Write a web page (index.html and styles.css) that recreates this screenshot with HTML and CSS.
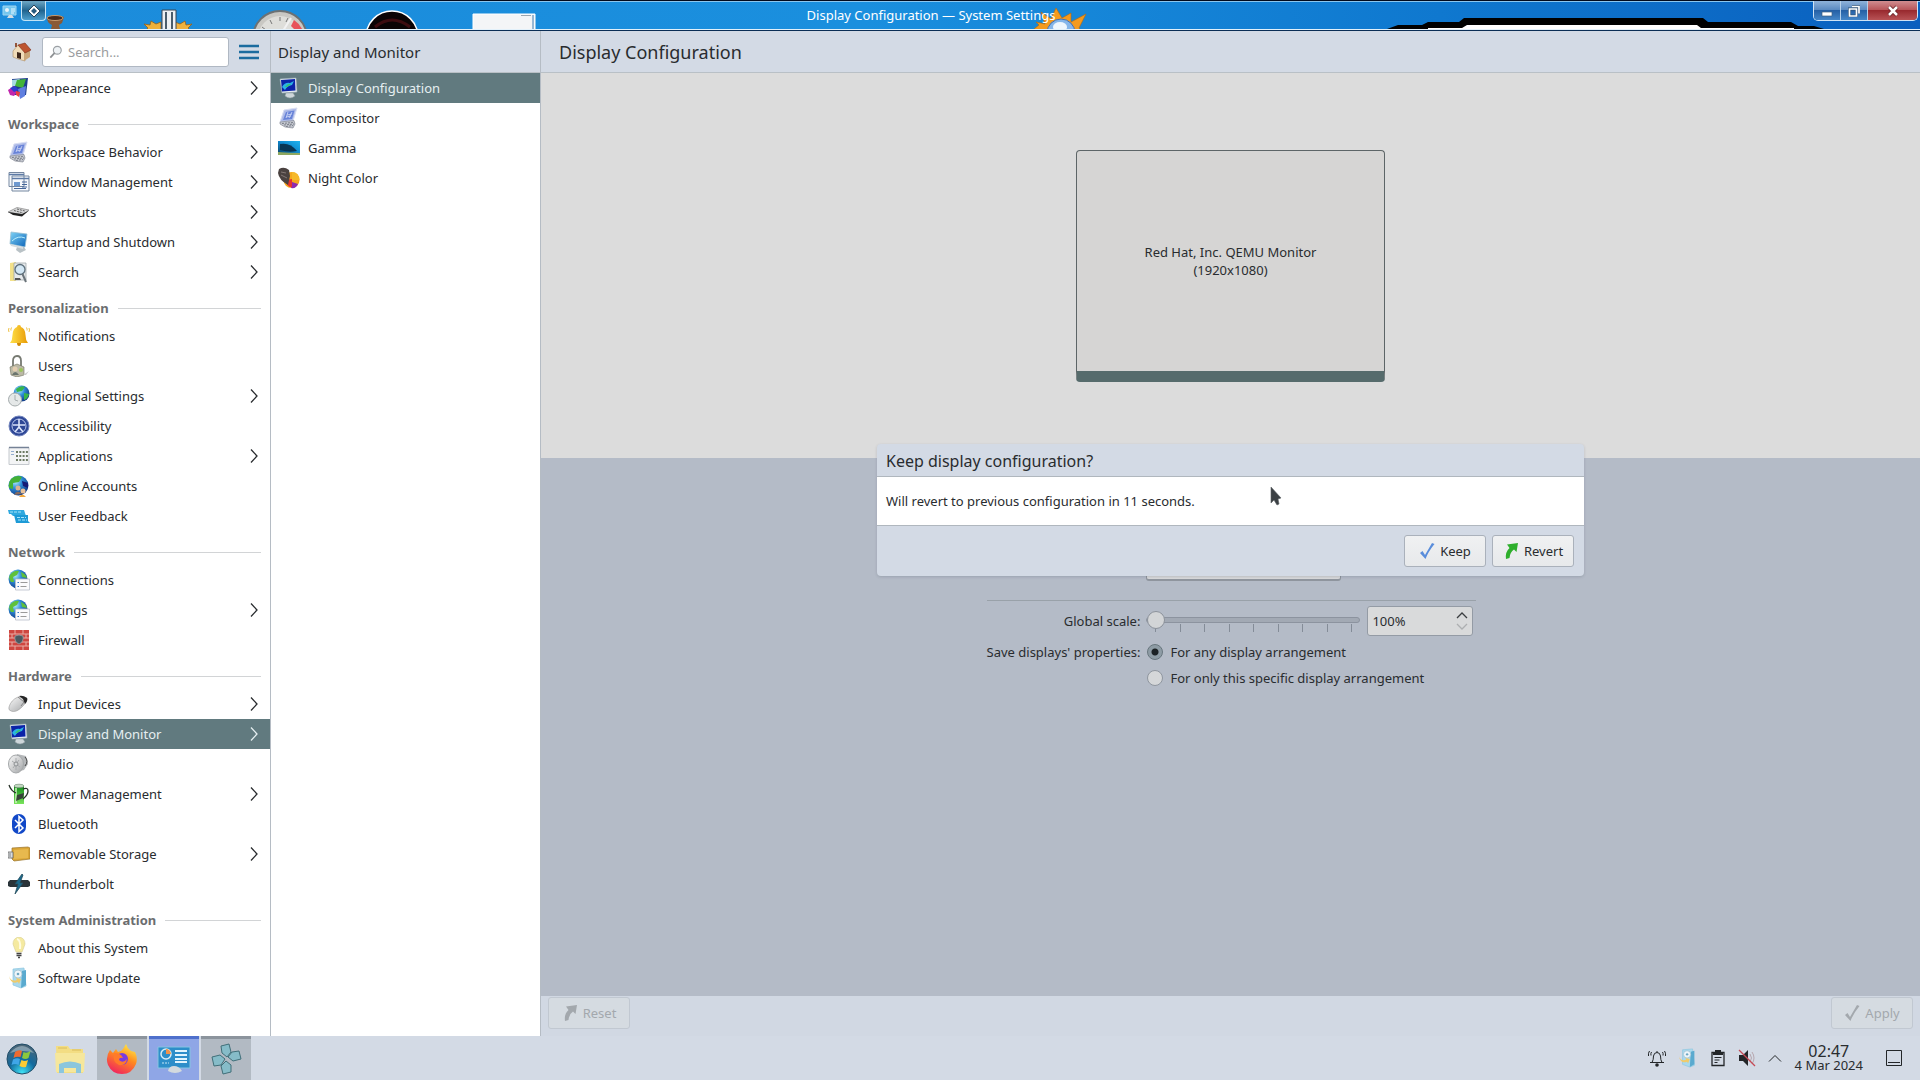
FILE: index.html
```html
<!DOCTYPE html>
<html lang="en">
<head>
  <meta charset="UTF-8">
  <meta name="viewport" content="width=device-width, initial-scale=1.0">
  <title>Display Configuration — System Settings</title>
  <link rel="stylesheet" href="styles.css">
</head>
<body>
  <!-- shared icons -->
  <svg class="sprite" aria-hidden="true">
    <defs>
      <linearGradient id="g-blue" x1="0" y1="0" x2="1" y2="1"><stop offset="0" stop-color="#7fd4f7"/><stop offset="1" stop-color="#0b62b8"/></linearGradient>
      <linearGradient id="g-gamma" x1="0" y1="1" x2="1" y2="0"><stop offset="0" stop-color="#0a3a5c"/><stop offset=".5" stop-color="#0e86cc"/><stop offset="1" stop-color="#1fb4ee"/></linearGradient>
      <linearGradient id="g-gold" x1="0" y1="0" x2="1" y2="0"><stop offset="0" stop-color="#ffe14a"/><stop offset="1" stop-color="#e89a05"/></linearGradient>
      <linearGradient id="g-grey" x1="0" y1="0" x2="1" y2="1"><stop offset="0" stop-color="#fafafa"/><stop offset="1" stop-color="#a2a4a6"/></linearGradient>
      <radialGradient id="g-globe" cx=".35" cy=".3" r=".8"><stop offset="0" stop-color="#bdf0ff"/><stop offset=".4" stop-color="#2f8fd8"/><stop offset="1" stop-color="#0a2a78"/></radialGradient>
      <linearGradient id="g-green" x1="0" y1="0" x2="0" y2="1"><stop offset="0" stop-color="#128c1a"/><stop offset="1" stop-color="#7ae45c"/></linearGradient>
    </defs>
    <symbol id="i-chevron" viewBox="0 0 8 14"><path d="M1 .5 7 7 1 13.5" fill="none" stroke="currentColor" stroke-width="1.3"/></symbol>
    <symbol id="i-monitor" viewBox="0 0 22 22">
      <path d="M2 2 18 1 19 15 4 16Z" fill="#e8eef2" stroke="#9fb0ba" stroke-width=".6"/>
      <path d="M3 3 17 2 17.5 13.5 4 14.5Z" fill="#0b23a8"/>
      <path d="M4 10Q7 5 12 6L16 4 14 8Q9 9 7 13Z" fill="#2bb2e6"/><path d="M7 10Q10 6 13 7L9 10Z" fill="#39c46c"/>
      <path d="M8 16h7l2 3q-5 4-10 0Z" fill="#cdd6da" stroke="#8d9aa0" stroke-width=".5"/>
    </symbol>
    <symbol id="i-desk" viewBox="0 0 22 22">
      <path d="M6 3 19 1 15 14 2 15Z" fill="#aebbe8" stroke="#d9def2" stroke-width="1"/>
      <path d="M8 5 16.5 3.500 14 12 5 13Z" fill="#6883d8"/><path d="M9 8l5-1M8 10l5-1M10 5l-2 6M14 5l-3 6" stroke="#cfd8f6" stroke-width=".8"/>
      <path d="M2 15 16 13.5 17 17 15 21 7 20 2 17Z" fill="#c4c7cf" stroke="#767b86" stroke-width=".6"/>
      <path d="M4 16.5l11-1M6 18l10-1M8 19.5l7-1" stroke="#686d78" stroke-width=".8" stroke-dasharray="2 1"/>
    </symbol>
    <symbol id="i-netglobe" viewBox="0 0 22 22">
      <circle cx="10" cy="10" r="9.5" fill="url(#g-globe)"/>
      <path d="M2 6Q6 1 11 2L9 6 5 8 6 13 3 13Q0 9 2 6ZM13 3q5 2 6 6l-5-1Z" fill="#5fc13b"/>
      <path d="M7.500 10h14v11h-14Z" fill="#fbfbfd" stroke="#b9bfca" stroke-width=".8"/>
      <path d="M9.500 13.500h1.500M9.500 17.500h1.500" stroke="#3a76c2" stroke-width="1.200"/><path d="M12.500 13.500h7M12.500 17.500h6" stroke="#9a9a9a" stroke-width="1"/>
    </symbol>
    <symbol id="i-package" viewBox="0 0 22 22">
      <path d="M5 2 16 1 18 19 13 21 5 18Z" fill="#a9d9ee" stroke="#8cc6e0" stroke-width=".7"/>
      <path d="M14 4 18 3 18 18 13 21Z" fill="#5aaacf"/><circle cx="10" cy="7" r="4" fill="#eef6fa" stroke="#9fc0d0" stroke-width=".8"/><circle cx="10" cy="7" r="1.300" fill="#6ea6c2"/>
      <path d="M1 9q2 6 8 4l-1-2 5 1-2 5-1-2q-7 3-9-6Z" fill="#f0cb6a"/>
    </symbol>
    <symbol id="i-revert" viewBox="0 0 16 18"><path d="M3 17Q2 10 6.500 6L4 2.500 15 1 13.500 10 11 7.500Q7 10 6.500 16Z" fill="currentColor"/></symbol>
    <symbol id="i-check" viewBox="0 0 16 18"><path d="M1 11 3.500 9 6 13 13 1 15.500 2Q9 10 6.500 17Z" fill="currentColor"/></symbol>
  </svg>

  <header class="titlebar">
    <!-- desktop showing through the glass frame -->
    <svg class="desktop" viewBox="0 0 1920 29" width="1920" height="29" aria-hidden="true">
      <path d="M47 18Q55 13 64 17L62 23 59 25 60 29H51L52 25Q47 23 47 18Z" fill="#8a5a36"/><ellipse cx="55" cy="18" rx="8" ry="2.500" fill="#4a2c1b" stroke="#c79a6d"/>
      <path d="M144 24l6 1 1-4 5 3 5-2v9h-16l3-3ZM192 24l-6 1-1-4-5 3-5-2v9h16l-3-3Z" fill="#f0b13c" stroke="#94611a" stroke-width=".8"/>
      <path d="M162 10h14v20h-14Z" fill="#eef1f3" stroke="#394754"/><path d="M166 12v18M172 12v18" stroke="#4b5d6b" stroke-width="2"/>
      <circle cx="280" cy="38" r="27" fill="#c9c8c3" stroke="#6c7173" stroke-width="2"/><circle cx="280" cy="38" r="22" fill="#dededa"/>
      <path d="M294 20A24 24 0 0 1 303 31L297 32 291 26Z" fill="#e8525a"/><path d="M281 34 291 18" stroke="#f2f2f2" stroke-width="2"/><path d="M262 27l4 3M270 20l2 4M280 17v4M288 18l-2 4" stroke="#777"/>
      <circle cx="392" cy="37" r="26" fill="#0b0405" stroke="#fff" stroke-width="1.500"/><path d="M375 27Q392 13 410 27" stroke="#3d0c10" stroke-width="3" fill="none"/>
      <path d="M473 14h62v16h-62Z" fill="#f4f5f7" stroke="#fff"/><path d="M533 15v14" stroke="#3c7bb0"/><path d="M521 15.500h10" stroke="#9ba6b0"/>
      <path d="M1036 22l9 2-4-12 10 7 5-11 6 10 9-5v9l15-8-7 14 4 4h-46l-3-3 5-4Z" fill="#f49a1d" stroke="#b5670b" stroke-width=".6"/>
      <circle cx="1061" cy="33" r="14" fill="#85b6ea" stroke="#446fae"/><ellipse cx="1060" cy="27" rx="7" ry="5" fill="#eef6fd"/>
      <path d="M1387 29 1398 25H1422L1428 22H1459L1464 18H1703L1708 22H1791L1798 26H1814L1824 29Z" fill="#000"/>
      <path d="M1428 29V28H1462L1467 25H1697L1701 28H1794V29Z" fill="#fff"/>
    </svg>
    <svg class="app-icon" viewBox="0 0 16 16" aria-hidden="true"><path d="M1 2h13v9H1Z" fill="#75c6ee" stroke="#9ed5f1"/><circle cx="5" cy="6" r="2" fill="#e7f4fa"/><path d="M9 5h4M9 7h4M9 9h3" stroke="#e9f8ff"/><path d="M5 14l2-3h3l2 3Z" fill="#d4dde3"/></svg>
    <button class="keep-above" aria-label="Keep above"><svg viewBox="0 0 14 14" width="14" height="14"><path d="M7 1 13 7 7 13 1 7Z" fill="#fff" stroke="#2c4558"/><path d="M7 4 10 7 7 10 4 7Z" fill="#275a7e"/></svg></button>
    <div class="window-title">Display Configuration — System Settings</div>
    <div class="window-buttons">
      <button aria-label="Minimize"><svg viewBox="0 0 12 12" width="12" height="12"><path d="M1 7h10v4H1Z" fill="#fff" stroke="#3c5e82" stroke-width=".7"/></svg></button>
      <button aria-label="Restore"><svg viewBox="0 0 12 12" width="12" height="12"><path d="M4 1.500h7v7M1.500 4h7v7h-7Z" fill="none" stroke="#2f5277" stroke-width="3"/><path d="M4 1.500h7v7M1.500 4h7v7h-7Z" fill="none" stroke="#fff" stroke-width="1.700"/></svg></button>
      <button class="close" aria-label="Close"><svg viewBox="0 0 12 12" width="12" height="12"><path d="M2 2l8 8M10 2l-8 8" stroke="#612025" stroke-width="4"/><path d="M2 2l8 8M10 2l-8 8" stroke="#fff" stroke-width="2.500"/></svg></button>
    </div>
  </header>

  <div class="window">
    <nav class="sidebar">
      <div class="toolbar">
        <button class="plain" aria-label="Home"><svg viewBox="0 0 22 22" width="22" height="22"><path d="M3 10 8 4 15 9V20L8 18 3 16Z" fill="#f0dcb9" stroke="#aa8b63" stroke-width=".6"/><path d="M14 10 20 9V16L14 20Z" fill="#c9a679"/><path d="M8 4 15 2 21 9 15 12Z" fill="#bd5531" stroke="#7c2e18" stroke-width=".6"/><path d="M7 11l4 1v6l-4-1Z" fill="#3f281b"/><path d="M5 2h2v4H5Z" fill="#93543a"/></svg></button>
        <div class="search">
          <svg viewBox="0 0 16 16" width="14" height="14" aria-hidden="true"><circle cx="9.500" cy="6" r="4.500" fill="#eef2f5" stroke="#9ba0a4" stroke-width="1.300"/><path d="M6.500 9 1.500 14.500" stroke="#8d9093" stroke-width="2"/></svg>
          <input type="text" placeholder="Search..." aria-label="Search">
        </div>
        <button class="plain menu" aria-label="Menu"><svg viewBox="0 0 20 16" width="20" height="16"><path d="M0 2h20M0 8h20M0 14h20" stroke="#1b6c9f" stroke-width="2.500"/></svg></button>
      </div>

      <a class="item" href="#"><svg class="icon" viewBox="0 0 22 22"><path d="M4 2 20 1 18 18 5 18Z" fill="#1d3c8c"/><path d="M4 3 12 2 8 9 4 9Z" fill="#a7dbe4"/><path d="M9 3l9-1-3 9-8-2Z" fill="#42b339"/><path d="M0 13l6-4 3 6-3 4-4-1Z" fill="#c026ad"/><path d="M2 11l5-2 4 4-5 2Z" fill="#2b3fd0"/><path d="M10 12l8-3-1 10-5 3Z" fill="#5f7fe0"/><path d="M8 14l4 1-1 5-3-2Z" fill="#ea3e3e"/></svg><span>Appearance</span><svg class="chevron"><use href="#i-chevron"/></svg></a>

      <h2 class="section">Workspace</h2>
      <a class="item" href="#"><svg class="icon"><use href="#i-desk"/></svg><span>Workspace Behavior</span><svg class="chevron"><use href="#i-chevron"/></svg></a>
      <a class="item" href="#"><svg class="icon" viewBox="0 0 22 22"><path d="M1 1.500h15v14H1ZM4 5h17v15H4Z" fill="#f7f9fc" stroke="#7587a0"/><path d="M1 3.500h15M4 7.500h17" stroke="#5e7ba6" stroke-width="1.500"/><path d="M6 11h6v4H6Z" fill="#6f99cf"/><path d="M14 11h5M14 13.500h5M14 16h5M6 17.500h12" stroke="#46679a"/></svg><span>Window Management</span><svg class="chevron"><use href="#i-chevron"/></svg></a>
      <a class="item" href="#"><svg class="icon" viewBox="0 0 22 22"><path d="M0 11 9 6.500 21 9 14 14Z" fill="#d4d5d6" stroke="#777" stroke-width=".6"/><path d="M0 11 14 13 21 9.500 14 15.500 5 14Z" fill="#222"/><path d="M6 9.500l9 2.500M9 8l8 2" stroke="#666" stroke-dasharray="2 1"/></svg><span>Shortcuts</span><svg class="chevron"><use href="#i-chevron"/></svg></a>
      <a class="item" href="#"><svg class="icon" viewBox="0 0 22 22"><path d="M3 1 19 3 17 16 2 13Z" fill="url(#g-blue)" stroke="#98bfd2" stroke-width=".8"/><path d="M4 10Q10 4 17 7" stroke="#baf0ff" fill="none"/><path d="M9 16h7l2 3-6 3-4-3Z" fill="#b9c2c6"/><path d="M2 13l13 3v2L3 15Z" fill="#d7dde0"/></svg><span>Startup and Shutdown</span><svg class="chevron"><use href="#i-chevron"/></svg></a>
      <a class="item" href="#"><svg class="icon" viewBox="0 0 22 22"><path d="M2 2 8 1V20H2Z" fill="#f3e189"/><path d="M6 2h12v17H6Z" fill="#e7eaec" stroke="#969da2" stroke-width=".7"/><circle cx="12" cy="8.500" r="5" fill="#d3e7f4" stroke="#5e707c" stroke-width="1.300"/><path d="M14.500 13 18 21" stroke="#6a7379" stroke-width="2"/><path d="M7 17h5l1 2H7Z" fill="#555"/></svg><span>Search</span><svg class="chevron"><use href="#i-chevron"/></svg></a>

      <h2 class="section">Personalization</h2>
      <a class="item" href="#"><svg class="icon" viewBox="0 0 22 22"><path d="M11 0q2 0 2 2 4 1 4.500 8 0 5 2.500 8H2Q4.500 15 4.500 10 5 3 9 2q0-2 2-2Z" fill="url(#g-gold)"/><path d="M9 18h4q0 3-2 3t-2-3Z" fill="#cf8908"/><path d="M1 3q-1 2 0 4M3.500 2.500q-1 2-.5 3M21 3q1 2 0 4M18.500 2.500q1 2 .5 3" stroke="#edc145" fill="none"/></svg><span>Notifications</span></a>
      <a class="item" href="#"><svg class="icon" viewBox="0 0 22 22"><path d="M5 11V6Q5 1 9 1t4 5v5" fill="none" stroke="#777a72" stroke-width="1.800"/><path d="M2 12 9 9l7 3v8l-7 2-6-2Z" fill="#bbb9a5" stroke="#70705e" stroke-width=".6"/><circle cx="7" cy="14" r="2.500" fill="#e3cdb0"/><path d="M4 20q3-6 7 0Z" fill="#6a746d"/><circle cx="13" cy="15" r="2" fill="#9bc45c"/><path d="M15 20l6-4-3 4Z" fill="#ccc"/></svg><span>Users</span></a>
      <a class="item" href="#"><svg class="icon" viewBox="0 0 22 22"><circle cx="13.500" cy="8.500" r="8" fill="url(#g-globe)"/><path d="M8 4q5-4 9-2l-3 4-5 1ZM16 8l5 1q-1 5-5 6Z" fill="#39b54a"/><circle cx="7" cy="14.500" r="6.500" fill="#e5e8e8" stroke="#a4abac"/><path d="M7 10v5l3 1" stroke="#a5adae" fill="none"/></svg><span>Regional Settings</span><svg class="chevron"><use href="#i-chevron"/></svg></a>
      <a class="item" href="#"><svg class="icon" viewBox="0 0 22 22"><circle cx="11" cy="11" r="10" fill="#2e4796" stroke="#7284bd"/><circle cx="11" cy="11" r="7" fill="none" stroke="#b9c7ee"/><path d="M11 4v8M5 10h12M11 12l-4 5M11 12l4 5" stroke="#dbe4fa" stroke-width="1.600"/></svg><span>Accessibility</span></a>
      <a class="item" href="#"><svg class="icon" viewBox="0 0 22 22"><path d="M1 2.500h20v17H1Z" fill="#f3f4f5" stroke="#c5c9ce"/><path d="M1 2.500h20" stroke="#758296" stroke-width="1.500"/><path d="M3 6.500h3M3 9.500h3" stroke="#92acd0"/><path d="M8 7h12M8 11h12M8 15h12" stroke="#6d7a64" stroke-width="2" stroke-dasharray="2 1.300"/></svg><span>Applications</span><svg class="chevron"><use href="#i-chevron"/></svg></a>
      <a class="item" href="#"><svg class="icon" viewBox="0 0 22 22"><circle cx="10.500" cy="10.500" r="10" fill="url(#g-globe)"/><path d="M3 4q5-5 11-2l-3 5-6 1v6l-4-1Q0 8 3 4Z" fill="#43b035"/><path d="M14 6l6 2v5l-5-2Z" fill="#161b75"/><circle cx="10" cy="13" r="2.500" fill="#d9b193"/><path d="M6 20q3-6 8-1Z" fill="#896a5c"/><circle cx="15" cy="16" r="2.500" fill="#e8c19a"/><path d="M11 22q3-5 7 0Z" fill="#f1a63c"/></svg><span>Online Accounts</span></a>
      <a class="item" href="#"><svg class="icon" viewBox="0 0 22 22"><path d="M0 5h16l2 6H5L3 9H1Z" fill="#2fa9df"/><path d="M6 10h14v6l2 2H8Z" fill="#1d9ad6"/><path d="M2 7h12M9 12.500h9M10 15h9" stroke="#a7e5fb" stroke-dasharray="3 1"/></svg><span>User Feedback</span></a>

      <h2 class="section">Network</h2>
      <a class="item" href="#"><svg class="icon"><use href="#i-netglobe"/></svg><span>Connections</span></a>
      <a class="item" href="#"><svg class="icon"><use href="#i-netglobe"/></svg><span>Settings</span><svg class="chevron"><use href="#i-chevron"/></svg></a>
      <a class="item" href="#"><svg class="icon" viewBox="0 0 22 22"><path d="M1 1h20v20H1Z" fill="#cf4640"/><path d="M1 5h20M1 9h20M1 13h20M1 17h20M7 1v4M15 1v4M4 5v4M18 5v4M4 13v4M18 13v4M7 17v4M15 17v4" stroke="#e9aca5"/><path d="M11 6l4 1q1 6-4 8-5-2-4-8Z" fill="#4b5960" stroke="#939fa5" stroke-width=".8"/></svg><span>Firewall</span></a>

      <h2 class="section">Hardware</h2>
      <a class="item" href="#"><svg class="icon" viewBox="0 0 22 22"><path d="M1 14Q3 7 10 4L19 5Q20 8 14 14 8 20 3 18 0 17 1 14Z" fill="url(#g-grey)" stroke="#999" stroke-width=".6"/><path d="M11 3Q15 2 19 5 20 8 17 11L15 6Z" fill="#252525"/><path d="M10 4 16 9M16 9l-3 4" stroke="#777" stroke-width=".8"/></svg><span>Input Devices</span><svg class="chevron"><use href="#i-chevron"/></svg></a>
      <a class="item selected" href="#"><svg class="icon"><use href="#i-monitor"/></svg><span>Display and Monitor</span><svg class="chevron"><use href="#i-chevron"/></svg></a>
      <a class="item" href="#"><svg class="icon" viewBox="0 0 22 22"><path d="M9 1l9 2 2 8-4 6-8 2Z" fill="#b4b7b9"/><ellipse cx="8" cy="11" rx="7.500" ry="9" fill="url(#g-grey)" stroke="#a3a6a8"/><path d="M4 8l8 6M11 7l-6 8M8 5v12" stroke="#a8abad"/><circle cx="8" cy="11" r="2" fill="#d5d7d8" stroke="#8c8f91"/><path d="M17 4q4 4 0 9" stroke="#444" fill="none"/></svg><span>Audio</span></a>
      <a class="item" href="#"><svg class="icon" viewBox="0 0 22 22"><path d="M6 3h10v18H6Z" fill="url(#g-green)"/><ellipse cx="11" cy="3" rx="5" ry="1.800" fill="#c2d9c0" stroke="#66806a" stroke-width=".6"/><path d="M8 5v15" stroke="#cff3bf" stroke-width="1.500"/><path d="M1 2q2 6 7 8M15 6q5-2 5 2t-5 8" stroke="#263128" fill="none" stroke-width="1.300"/><path d="M9 12l7-2-1 5-7 3Z" fill="#374239"/></svg><span>Power Management</span><svg class="chevron"><use href="#i-chevron"/></svg></a>
      <a class="item" href="#"><svg class="icon" viewBox="0 0 22 22"><rect x="4" y="1" width="14" height="20" rx="7" fill="#1148c8"/><path d="M7 7l8 8-4 3.500v-15L15 7l-8 8" fill="none" stroke="#fff" stroke-width="1.500"/></svg><span>Bluetooth</span></a>
      <a class="item" href="#"><svg class="icon" viewBox="0 0 22 22"><path d="M4 5 20 4 22 5V16L6 18 4 16Z" fill="#dba636" stroke="#98732b" stroke-width=".7"/><path d="M6 7 20 6V15L6 16Z" fill="#e8b94e"/><path d="M0 9h5v6H0Z" fill="#d9dcde" stroke="#666" stroke-width=".8"/><path d="M1.500 11h1M1.500 13h1" stroke="#333"/></svg><span>Removable Storage</span><svg class="chevron"><use href="#i-chevron"/></svg></a>
      <a class="item" href="#"><svg class="icon" viewBox="0 0 22 22"><path d="M0 9 2 7H20L22 9V13L20 14H2L0 13Z" fill="#2a3439"/><path d="M14 1 7 11h3L7 21 15 10h-3l3-8Z" fill="#1b6a8c" stroke="#234b5c" stroke-width=".8"/></svg><span>Thunderbolt</span></a>

      <h2 class="section">System Administration</h2>
      <a class="item" href="#"><svg class="icon" viewBox="0 0 22 22"><path d="M11 0Q17 1 17 7 16 10 14 15H8Q6 10 5 7 5 1 11 0Z" fill="#f5eaa0" stroke="#d8cf92" stroke-width=".6"/><path d="M9 2q4 1 3 10" stroke="#fffbe1" stroke-width="2" fill="none"/><path d="M8.500 16.500h5M8.500 18.500h5M10 20.500h2" stroke="#444" stroke-width="1.300"/></svg><span>About this System</span></a>
      <a class="item" href="#"><svg class="icon"><use href="#i-package"/></svg><span>Software Update</span></a>
    </nav>

    <nav class="subpages">
      <h2 class="toolbar">Display and Monitor</h2>
      <a class="item selected" href="#"><svg class="icon"><use href="#i-monitor"/></svg><span>Display Configuration</span></a>
      <a class="item" href="#"><svg class="icon"><use href="#i-desk"/></svg><span>Compositor</span></a>
      <a class="item" href="#"><svg class="icon" viewBox="0 0 22 22"><path d="M0 4h22v14H0Z" fill="url(#g-gamma)"/><path d="M2 7q10-2 17 7-8 2-17-1Z" fill="#083553"/><path d="M0 15q11 1 22 1v2H0Z" fill="#8fa860"/></svg><span>Gamma</span></a>
      <a class="item" href="#"><svg class="icon" viewBox="0 0 22 22"><circle cx="13.500" cy="13" r="8" fill="#f4a81d"/><path d="M14 5q7 0 7.500 8L14 13Z" fill="#f6b92a"/><path d="M14 15l6 2q-2 5-7 4Z" fill="#8d2ab0"/><path d="M8 13l6-1v8q-5 1-6-7Z" fill="#e5342d"/><path d="M1 2Q6-1 11 3L12 9 10 18Q1 13 0 6Z" fill="#4a4240"/><path d="M3 5l5 1M3 8l6 3" stroke="#837875"/></svg><span>Night Color</span></a>
    </nav>

    <main class="page">
      <h1 class="toolbar">Display Configuration</h1>

      <section class="preview">
        <div class="screen">
          <p>Red Hat, Inc. QEMU Monitor<br>(1920x1080)</p>
        </div>
      </section>

      <form class="settings">
        <select class="refresh" aria-label="Refresh rate"><option>60 Hz</option></select>
        <hr>
        <label class="name" for="scale">Global scale:</label>
        <div class="scale">
          <div class="slider">
            <input type="range" id="scale" min="100" max="300" value="100">
            <svg viewBox="0 0 214 8" width="214" height="8" aria-hidden="true"><path d="M9.500 0v8M34.500 0v8M58.500 0v8M83.500 0v8M107.500 0v8M132.500 0v8M156.500 0v8M181.500 0v8M205.500 0v8" stroke="#848c98"/></svg>
          </div>
          <div class="spinbox">
            <input type="text" value="100%" aria-label="Scale percentage">
            <span class="steps">
              <button type="button" aria-label="Increase"><svg viewBox="0 0 12 8" width="12" height="8"><path d="M1 7l5-5 5 5" fill="none" stroke="#3b3e41" stroke-width="1.300"/></svg></button>
              <button type="button" aria-label="Decrease" disabled><svg viewBox="0 0 12 8" width="12" height="8"><path d="M1 1l5 5 5-5" fill="none" stroke="#adafb1" stroke-width="1.300"/></svg></button>
            </span>
          </div>
        </div>
        <span class="name">Save displays' properties:</span>
        <label class="choice"><input type="radio" name="arrangement" checked>For any display arrangement</label>
        <label class="choice second"><input type="radio" name="arrangement">For only this specific display arrangement</label>
      </form>

      <footer class="actions">
        <button class="button" disabled><svg width="16" height="18"><use href="#i-revert"/></svg>Reset</button>
        <button class="button" disabled><svg width="16" height="18"><use href="#i-check"/></svg>Apply</button>
      </footer>

      <div class="dialog" role="dialog" aria-labelledby="dialog-title">
        <h2 id="dialog-title">Keep display configuration?</h2>
        <p>Will revert to previous configuration in 11 seconds.</p>
        <div class="dialog-buttons">
          <button class="button keep"><svg width="16" height="18"><use href="#i-check"/></svg>Keep</button>
          <button class="button revert"><svg width="16" height="18"><use href="#i-revert"/></svg>Revert</button>
        </div>
        <svg class="pointer" viewBox="0 0 12 20" width="12" height="20" aria-hidden="true"><path d="M1 1V17L4 14 7 19 9 18 8 13 11 12Z" fill="#3b4044" stroke="#5a5f63" stroke-width=".6"/></svg>
      </div>
    </main>
  </div>

  <footer class="taskbar">
    <button class="task start" aria-label="Start"><svg viewBox="0 0 32 32" width="32" height="32">
      <defs><radialGradient id="g-orb" cx=".5" cy=".95" r=".9"><stop offset="0" stop-color="#3fe2f5"/><stop offset=".5" stop-color="#126a9e"/><stop offset="1" stop-color="#4a6678"/></radialGradient></defs>
      <circle cx="16" cy="16" r="15" fill="url(#g-orb)" stroke="#1f4c68"/>
      <path d="M4 10Q16-4 28 10 16 6 4 10Z" fill="#fff" opacity=".35"/>
      <path d="M9 9q4-3 7-1l-1.500 6q-4-1-7 1Z" fill="#ee6a30"/><path d="M17.500 9q3 2 7-1l-2 7q-3 2-6.500 0Z" fill="#8cc83c"/><path d="M7 16.500q4-2 7-.5l-1.500 6q-3-2-7 0Z" fill="#40a6e8"/><path d="M15.500 17q3 2 6.500 0l-2 7q-3 1-6.500-1Z" fill="#fccb34"/></svg></button>
    <button class="task" aria-label="File manager"><svg viewBox="0 0 32 32" width="32" height="32"><path d="M2 3h12l2 3h13v24H3Z" fill="#f3dd83"/><path d="M4 5h9M18 7h9" stroke="#d9bc5c"/><path d="M1 10h30l-1 19H2Z" fill="#f6e79c"/><path d="M5 30v-9q11-5 22 0v9h-5v-5H10v5Z" fill="#8bc6dd"/></svg></button>
    <button class="task running" aria-label="Firefox"><svg viewBox="0 0 32 32" width="32" height="32">
      <defs><linearGradient id="g-fox" x1=".8" y1="0" x2=".3" y2="1"><stop offset="0" stop-color="#fff04a"/><stop offset=".45" stop-color="#ff8a1f"/><stop offset="1" stop-color="#f0235f"/></linearGradient></defs>
      <path d="M20 1q1 4 5 7l4 1q3 6 1 12-4 10-14 10T2 22Q-1 14 4 7l3 3 3-4 2 3q4-1 5-3Z" fill="url(#g-fox)"/>
      <circle cx="16" cy="16" r="6" fill="#7a3be0"/><path d="M8 10q7 0 9 5-4-1-4 2 4 4 8-1-1 7-8 6-7-3-5-12Z" fill="#ff7a2a"/></svg></button>
    <button class="task running active" aria-label="System Settings"><svg viewBox="0 0 34 30" width="34" height="30"><path d="M1 3h32v21H1Z" fill="#2d8ec9" stroke="#86c3e2"/><path d="M18 7h12M18 11h12M18 15h12M18 18h12" stroke="#dff4fd" stroke-width="2"/><circle cx="9" cy="10" r="5" fill="none" stroke="#d6edf7" stroke-width="1.500"/><path d="M9 5a5 5 0 0 1 5 5H9Z" fill="#f0934a"/><path d="M5 19h7" stroke="#c5e7f6" stroke-dasharray="2 1"/><path d="M11 27q1-5 6-5t8 5q-7 4-14 0Z" fill="#d3dade"/></svg></button>
    <button class="task running" aria-label="Game controller"><svg viewBox="0 0 32 32" width="32" height="32"><g fill="#86bcc8" stroke="#416f79"><path d="M11 3l8-2 2 8-4 5-5-4Z"/><path d="M22 9l7-1 2 8-8 2-5-4Z"/><path d="M16 18l5 4v7l-8 2-2-8Z"/><path d="M2 14l8-2 5 4-4 6-7 1Z"/></g></svg></button>

    <div class="tray">
      <button class="plain" aria-label="Notifications"><svg viewBox="0 0 18 18" width="18" height="18"><path d="M4 13.500Q5.500 11 5.500 7 6 3.500 9 3.500T12.500 7q0 4 1.500 6.500ZM9 3.500V2M1.500 2Q0 4 .5 7M3.500 3Q2.500 4.500 3 6.500M16.500 2Q18 4 17.500 7M14.500 3Q15.500 4.500 15 6.500M2 13.500h14" fill="none" stroke="#232629"/><circle cx="9" cy="16" r="1.800" fill="#232629"/></svg></button>
      <button class="plain" aria-label="Updates"><svg width="20" height="20"><use href="#i-package"/></svg></button>
      <button class="plain" aria-label="Clipboard"><svg viewBox="0 0 16 18" width="16" height="18"><path d="M2 3.500h12v13H2Z" fill="none" stroke="#232629" stroke-width="1.300"/><path d="M5 1h6v2h2v3H3V3h2Z" fill="#232629"/><path d="M4.500 8.500h7M4.500 11h5M4.500 13.500h3" stroke="#232629"/></svg></button>
      <button class="plain" aria-label="Muted"><svg viewBox="0 0 18 18" width="18" height="18"><path d="M1 6h4l5-5v16l-5-5H1Z" fill="#232629"/><path d="M12 5q3 4 0 8M14 3q4 6 0 12" fill="none" stroke="#b7a6ae"/><path d="M1 1l16 16" stroke="#c64a56" stroke-width="1.300"/></svg></button>
      <button class="plain" aria-label="Show hidden icons"><svg viewBox="0 0 14 8" width="14" height="8"><path d="M1 7.500l6-6 6 6" fill="none" stroke="#232629"/></svg></button>
      <div class="clock"><time>02:47</time><span>4 Mar 2024</span></div>
      <button class="plain" aria-label="Show desktop"><svg viewBox="0 0 16 16" width="16" height="16"><path d="M.5.5h15v15H.5ZM2 12.500h12" fill="none" stroke="#232629"/></svg></button>
    </div>
  </footer>
</body>
</html>
```
FILE: styles.css
```css
* { box-sizing: border-box; }
body {
  margin: 0;
  min-height: 100vh;
  display: flex;
  flex-direction: column;
  font-family: "Noto Sans", sans-serif;
  font-size: 13px;
  line-height: 18px;
  color: #292c2f;
  background: #d3dae5;
}
h1, h2, p { margin: 0; font-weight: normal; }
button, input, select { font: inherit; color: inherit; }
svg { display: block; flex: none; }
.sprite { position: absolute; width: 0; height: 0; }
.plain { border: 0; padding: 0; background: none; }

/* title bar */
.titlebar {
  position: relative;
  display: flex;
  align-items: flex-start;
  height: 31px;
  overflow: hidden;
  background: linear-gradient(90deg, #1c8cdb 0%, #1a8fde 45%, #0f78cf 75%, #0a5fbe 100%);
  border-top: 1px solid #020a1c;
  border-bottom: 1px solid #0a2d55;
  box-shadow: inset 0 1px #8ac6ef, inset 0 -1px #e3f1fb;
}
.desktop { position: absolute; left: 0; top: -1px; }
.titlebar > :not(.desktop) { position: relative; }
.app-icon { width: 16px; height: 16px; margin: 3px 3px 0 2px; }
.keep-above {
  width: 25px;
  height: 20px;
  display: grid;
  place-items: center;
  padding: 0;
  border: 1px solid #c5e4f5;
  border-top: 0;
  border-radius: 0 0 4px 4px;
  background: linear-gradient(#6fa8c6, #20648f 50%, #4d9fcd);
}
.window-title { flex: 1; padding: 5px 0 0 3px; text-align: center; color: #fff; }
.window-buttons {
  display: flex;
  height: 20px;
  margin-right: 2px;
  border: 1px solid #cfe3f5;
  border-top: 0;
  border-radius: 0 0 5px 5px;
  overflow: hidden;
}
.window-buttons button {
  width: 27px;
  display: grid;
  place-items: center;
  padding: 0;
  border: 0;
  border-right: 1px solid #b5d0ea;
  background: linear-gradient(#8fb2da, #5c8bc2 45%, #2560a5 50%, #4486c8);
}
.window-buttons .close {
  width: 49px;
  border-right: 0;
  background: linear-gradient(#d08d90, #b9575b 45%, #992a2f 50%, #b85356);
}

/* window columns */
.window { flex: 1; display: flex; }
.sidebar, .subpages {
  flex: none;
  width: 271px;
  background: #fff;
  border-right: 1px solid #b5bcc4;
}
.subpages { width: 270px; }
.toolbar {
  display: flex;
  align-items: center;
  height: 42px;
  background: #d3dae5;
  border-bottom: 1px solid #b9c0c6;
}
.sidebar .toolbar { padding: 0 11px 0 10px; gap: 10px; }
.subpages .toolbar { padding: 0 7px; font-size: 15px; }
.page .toolbar { padding: 0 18px; font-size: 18px; }
.search {
  flex: 1;
  display: flex;
  align-items: center;
  gap: 5px;
  height: 30px;
  min-width: 0;
  padding: 0 6px;
  background: #fff;
  border: 1px solid #b0b8c3;
  border-radius: 3px;
}
.search input { flex: 1; min-width: 0; padding: 0; border: 0; outline: 0; background: none; }
.search input::placeholder { color: #9a9c9e; }

.item {
  display: flex;
  align-items: center;
  gap: 8px;
  height: 30px;
  padding: 0 12px 0 8px;
  color: #292c2f;
  text-decoration: none;
}
.subpages .item { padding-left: 7px; }
.item span { flex: 1; }
.item.selected { background: #617a7f; color: #e6eff1; }
.icon { width: 22px; height: 22px; }
.chevron { width: 8px; height: 14px; }
.section {
  display: flex;
  align-items: center;
  gap: 9px;
  height: 34px;
  padding: 8px 9px 0 8px;
  font-size: 13px;
  font-weight: bold;
  color: #6b6d6f;
}
.section::after { content: ""; flex: 1; height: 1px; background: #d2d4d6; }

/* page */
.page { flex: 1; position: relative; display: flex; flex-direction: column; background: #b4bbc7; }
.preview {
  height: 385px;
  padding-top: 77px;
  background: #dcdcdc;
}
.screen {
  display: grid;
  place-items: center;
  width: 309px;
  height: 232px;
  margin: 0 auto;
  text-align: center;
  background: #d6d5d4;
  border: 1px solid #5d6567;
  border-bottom: 11px solid #566b6c;
  border-radius: 4px;
}
.settings {
  flex: 1;
  display: grid;
  grid-template-columns: auto 330px;
  align-content: start;
  justify-content: center;
  column-gap: 6px;
  padding: 93px 0 0 2px;
}
.refresh {
  grid-column: 2;
  width: 195px;
  height: 30px;
  background: #d9dadb;
  border: 1px solid #8f959e;
  border-bottom-width: 2px;
  border-radius: 3px;
}
.settings hr { grid-column: 1 / 3; width: 100%; height: 1px; margin: 19px 0 5px; border: 0; background: #99a1a9; }
.name { align-self: center; text-align: right; }
.scale { display: flex; justify-content: space-between; }
.slider { width: 214px; padding-top: 5px; }
.slider input {
  display: block;
  width: 100%;
  height: 18px;
  margin: 0 0 -5px;
  appearance: none;
  background: none;
  position: relative;
  z-index: 1;
}
.slider input::-webkit-slider-runnable-track {
  height: 6px;
  background: #a2a9b4;
  border: 1px solid #8c939f;
  border-radius: 3px;
}
.slider input::-webkit-slider-thumb {
  appearance: none;
  width: 18px;
  height: 18px;
  margin-top: -7px;
  background: #d3d5d7;
  border: 1px solid #8c929b;
  border-radius: 50%;
}
.spinbox {
  display: flex;
  width: 106px;
  height: 30px;
  margin-right: 3px;
  padding: 0 3px;
  background: #d9dadb;
  border: 1px solid #949ba5;
  border-radius: 3px;
}
.spinbox input { flex: 1; min-width: 0; padding: 0 1px; border: 0; background: none; }
.steps { display: flex; flex-direction: column; justify-content: space-evenly; }
.steps button { display: block; padding: 0 1px; border: 0; background: none; }
.choice { display: flex; align-items: center; gap: 7px; height: 26px; padding-left: 1px; }
.settings > .choice, .settings > span.name { margin-top: 3px; }
.settings > .second { grid-column: 2; margin-top: 0; }
.choice input {
  appearance: none;
  width: 16px;
  height: 16px;
  margin: 0;
  border: 1px solid #8f969f;
  border-radius: 50%;
  background: #d5d7d9;
}
.choice input:checked { background: radial-gradient(circle, #1c2225 3px, #8e9ca5 4px); border-color: #68767e; }

.button {
  display: flex;
  align-items: center;
  justify-content: center;
  gap: 5px;
  width: 82px;
  height: 32px;
  padding: 0;
  background: linear-gradient(#f0f1f2, #e7e9eb);
  border: 1px solid #aab1bb;
  border-radius: 3px;
}
.button:disabled { color: #a3a8ad; background: #d5dbe1; border-color: #c1c8d1; }
.actions {
  display: flex;
  justify-content: space-between;
  height: 40px;
  padding: 1px 7px;
  background: #d1d8e3;
}

.dialog {
  position: absolute;
  top: 413px;
  left: 0;
  right: 0;
  width: 707px;
  margin: 0 auto;
  background: #d3dae5;
  border-radius: 4px;
  box-shadow: 0 1px 3px rgba(60, 70, 85, .2);
}
.dialog h2 { padding: 6px 9px 4px; font-size: 16px; line-height: 22px; border-bottom: 1px solid #b0b7be; }
.dialog p { padding: 15px 9px; background: #fff; border-bottom: 1px solid #b0b7be; }
.dialog-buttons { display: flex; justify-content: flex-end; gap: 6px; padding: 9px 10px; }
.keep svg { color: #598ddb; }
.revert svg { color: #2eaf2c; }
.pointer { position: absolute; left: 393px; top: 42px; }

/* taskbar */
.taskbar {
  display: flex;
  align-items: stretch;
  gap: 2px;
  height: 44px;
  background: #d3dae5;
}
.task {
  display: grid;
  place-items: center;
  width: 50px;
  padding: 0 0 2px;
  border: 0;
  border-top: 3px solid transparent;
  background: none;
}
.start { width: 43px; }
.running { background: #b2bac3; border-top-color: #8c949d; }
.active { background: #8fa6e6; border-top-color: #4f70cc; }
.tray { display: flex; align-items: center; gap: 12px; margin-left: auto; padding-right: 18px; }
.clock { display: flex; flex-direction: column; align-items: center; margin: 0 11px 0 1px; line-height: 14px; }
.clock time { font-size: 16px; }
```
